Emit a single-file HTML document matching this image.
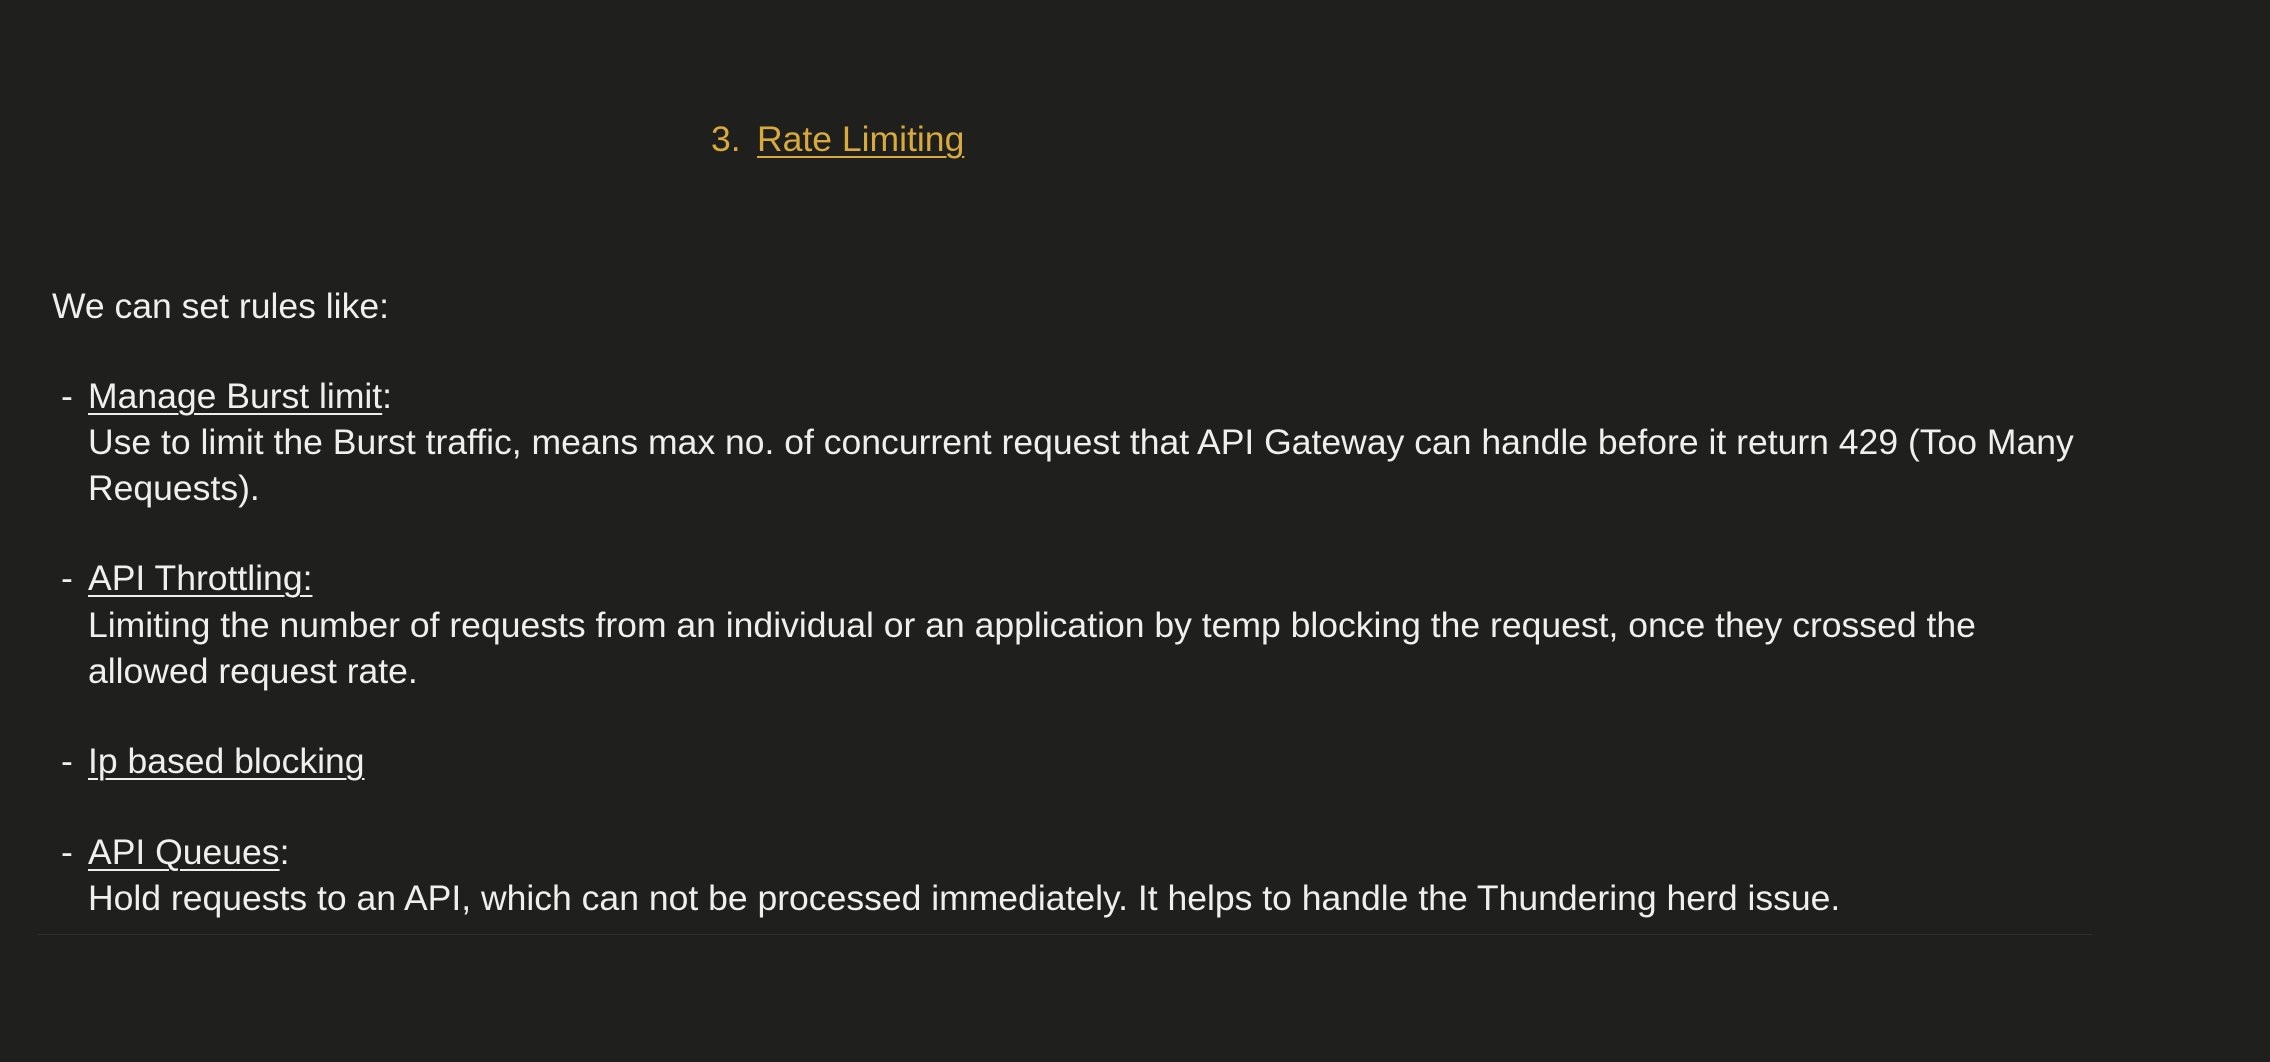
<!DOCTYPE html>
<html><head><meta charset="utf-8"><style>
html,body{margin:0;padding:0;background:#1f1f1e;width:2270px;height:1062px;overflow:hidden}
.l{position:absolute;white-space:nowrap;font-family:"Liberation Sans",sans-serif;font-size:35px;line-height:46px;color:#efefef;transform:scaleX(1.015);transform-origin:0 0}
u{text-decoration-thickness:2px;text-underline-offset:5px}
.t{color:#d8a93b}
.hr{position:absolute;left:37px;top:934px;width:2055px;height:1px;background:#2c2c2b}
</style></head><body>
<div class="l t" style="left:711px;top:117px">3.</div>
<div class="l t" style="left:757px;top:117px"><u>Rate Limiting</u></div>
<div class="l" style="left:52px;top:284px">We can set rules like:</div>
<div class="l" style="left:61px;top:374px">-</div>
<div class="l" style="left:88px;top:374px"><u>Manage Burst limit</u>:</div>
<div class="l" style="left:88px;top:420px">Use to limit the Burst traffic, means max no. of concurrent request that API Gateway can handle before it return 429 (Too Many</div>
<div class="l" style="left:88px;top:466px">Requests).</div>
<div class="l" style="left:61px;top:556px">-</div>
<div class="l" style="left:88px;top:556px"><u>API Throttling:</u></div>
<div class="l" style="left:88px;top:603px">Limiting the number of requests from an individual or an application by temp blocking the request, once they crossed the</div>
<div class="l" style="left:88px;top:649px">allowed request rate.</div>
<div class="l" style="left:61px;top:739px">-</div>
<div class="l" style="left:88px;top:739px"><u>Ip based blocking</u></div>
<div class="l" style="left:61px;top:830px">-</div>
<div class="l" style="left:88px;top:830px"><u>API Queues</u>:</div>
<div class="l" style="left:88px;top:876px">Hold requests to an API, which can not be processed immediately. It helps to handle the Thundering herd issue.</div>
<div class="hr"></div>
</body></html>
